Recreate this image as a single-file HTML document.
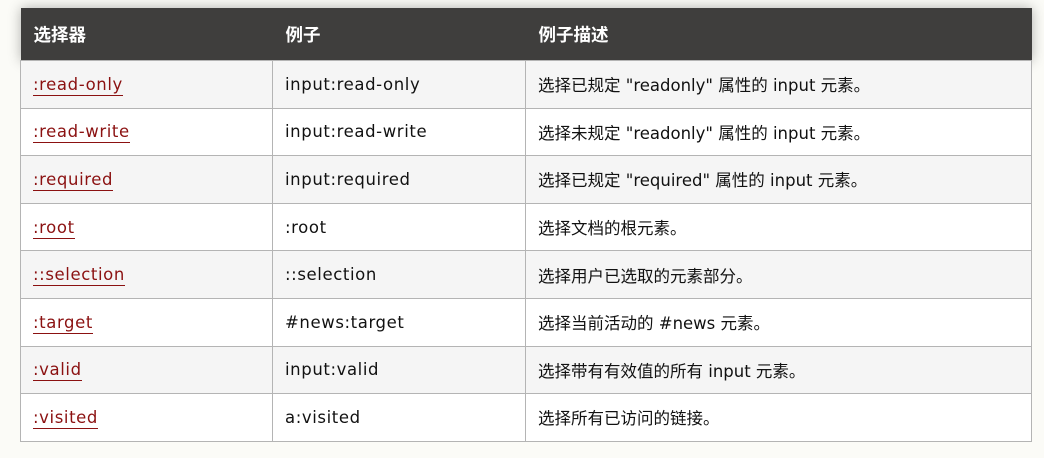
<!DOCTYPE html>
<html><head><meta charset="utf-8"><style>
body{margin:0;background:#fbfbf7;width:1044px;height:458px;overflow:hidden;font-family:"DejaVu Sans","Noto Sans CJK SC",sans-serif;}
table{position:absolute;left:20px;top:8px;width:1012px;border-collapse:collapse;font-size:16.5px;color:#111;}
th{background:#3f3e3d;color:#fff;text-align:left;font-weight:bold;height:52px;padding:0 13px;font-size:17.5px;}
thead tr{box-shadow:0 0 12px rgba(0,0,0,.3);}
td{border:1px solid #b4b4b4;height:47.6px;padding:0 12px;box-sizing:border-box;}
td.l{letter-spacing:.6px}
tbody tr:nth-child(odd){background:#f5f5f5}
tbody tr:nth-child(even){background:#fff}
a{color:#8b1111;text-decoration:none;border-bottom:1px solid #8b1111;padding-bottom:1px}
</style></head><body>
<table>
<colgroup><col style="width:252px"><col style="width:253px"><col></colgroup>
<thead><tr><th>选择器</th><th>例子</th><th>例子描述</th></tr></thead>
<tbody>
<tr><td class="l"><a>:read-only</a></td><td class="l">input:read-only</td><td>选择已规定 "readonly" 属性的 input 元素。</td></tr>
<tr><td class="l"><a>:read-write</a></td><td class="l">input:read-write</td><td>选择未规定 "readonly" 属性的 input 元素。</td></tr>
<tr><td class="l"><a>:required</a></td><td class="l">input:required</td><td>选择已规定 "required" 属性的 input 元素。</td></tr>
<tr><td class="l"><a>:root</a></td><td class="l">:root</td><td>选择文档的根元素。</td></tr>
<tr><td class="l"><a>::selection</a></td><td class="l">::selection</td><td>选择用户已选取的元素部分。</td></tr>
<tr><td class="l"><a>:target</a></td><td class="l">#news:target</td><td>选择当前活动的 #news 元素。</td></tr>
<tr><td class="l"><a>:valid</a></td><td class="l">input:valid</td><td>选择带有有效值的所有 input 元素。</td></tr>
<tr><td class="l"><a>:visited</a></td><td class="l">a:visited</td><td>选择所有已访问的链接。</td></tr>
</tbody></table>
</body></html>
